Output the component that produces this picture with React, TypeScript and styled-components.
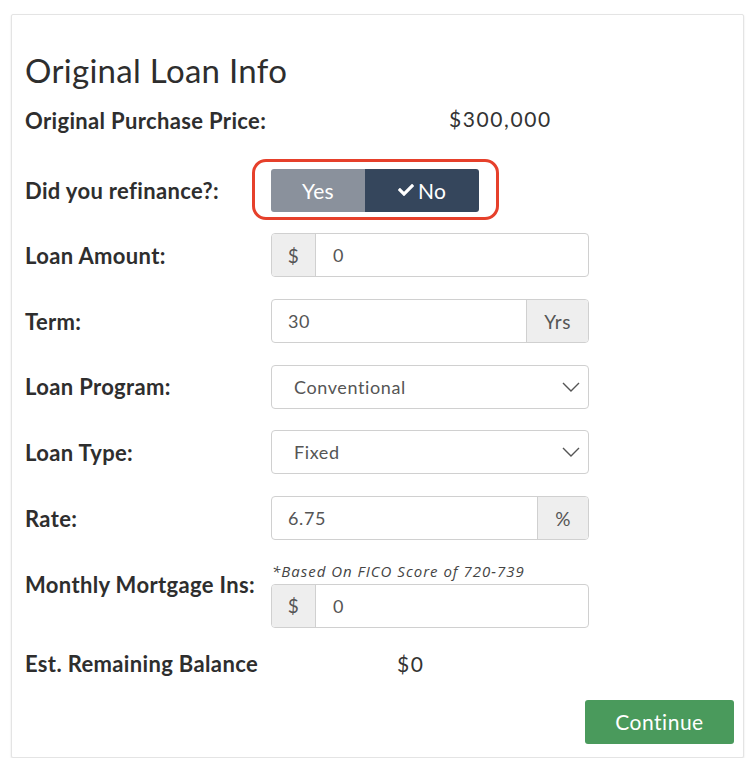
import styled, { createGlobalStyle } from 'styled-components'
import { FaCheck } from 'react-icons/fa'

const GlobalStyle = createGlobalStyle`
  html, body {
    margin: 0;
    padding: 0;
    background: #ffffff;
    font-family: Lato, "Noto Sans", sans-serif;
    color: #2e2e2e;
  }
  * {
    box-sizing: border-box;
  }
`

const Card = styled.div`
  width: 733px;
  margin: 14px 0 0 11px;
  padding: 35px 9px 13px 13px;
  border: 1px solid #e4e4e4;
  border-radius: 2px;
  box-shadow: 0 1px 2px rgba(0, 0, 0, 0.12);
  background: #ffffff;
`

const Title = styled.h1`
  margin: 0 0 13px;
  font-size: 33px;
  font-weight: 400;
  line-height: 40px;
  letter-spacing: 0.3px;
  color: #2e2e2e;
`

const Form = styled.div`
  display: flex;
  flex-direction: column;
  gap: 21.7px;
`

const Row = styled.div<{ $height?: number }>`
  display: flex;
  align-items: center;
  min-height: ${(p) => p.$height ?? 44}px;
`

const Label = styled.div<{ $shift?: number }>`
  width: 246px;
  flex: none;
  font-size: 22px;
  font-weight: 700;
  letter-spacing: 0.35px;
  color: #2e2e2e;
  white-space: nowrap;
  transform: translateY(${(p) => p.$shift ?? 0}px);
`

const Value = styled.div<{ $indent: number; $shift?: number }>`
  padding-left: ${(p) => p.$indent}px;
  font-size: 21px;
  color: #333;
  letter-spacing: 1.6px;
  transform: translateY(${(p) => p.$shift ?? 0}px);
`

const Field = styled.div`
  display: flex;
  flex-direction: column;
  width: 318px;
`

const Note = styled.div`
  font-family: "Open Sans", Lato, sans-serif;
  font-size: 15px;
  font-style: italic;
  color: #444;
  margin: 0 0 4px 1px;
  line-height: 18px;
  letter-spacing: 1px;
  white-space: nowrap;
`

const Group = styled.div`
  display: flex;
  width: 318px;
  height: 44px;
  border: 1px solid #d0d0d0;
  border-radius: 4px;
  overflow: hidden;
  background: #fff;
`

const Addon = styled.div<{ $width: number; $side: 'left' | 'right' }>`
  width: ${(p) => p.$width}px;
  flex: none;
  display: flex;
  align-items: center;
  justify-content: center;
  background: #eeeeee;
  color: #555;
  font-size: 19px;
  letter-spacing: 0.4px;
  ${(p) => (p.$side === 'left' ? 'border-right' : 'border-left')}: 1px solid #d0d0d0;
`

const InputText = styled.div<{ $pad: number }>`
  flex: 1;
  display: flex;
  align-items: center;
  padding-left: ${(p) => p.$pad}px;
  font-size: 18px;
  color: #555;
  letter-spacing: 0.6px;
`

const Select = styled.div`
  display: flex;
  align-items: center;
  justify-content: space-between;
  width: 318px;
  height: 44px;
  padding: 0 7px 0 22px;
  border: 1px solid #d0d0d0;
  border-radius: 4px;
  font-size: 18px;
  color: #555;
  letter-spacing: 0.6px;
`

const Toggle = styled.div`
  position: relative;
  display: flex;
  height: 43px;

  &::before {
    content: '';
    position: absolute;
    top: -10px;
    bottom: -8px;
    left: -19px;
    right: -20px;
    border: 3px solid #e6402b;
    border-radius: 14px;
  }
`

const ToggleButton = styled.div<{ $active?: boolean; $width: number }>`
  width: ${(p) => p.$width}px;
  display: flex;
  align-items: center;
  justify-content: center;
  gap: 4px;
  font-size: 21px;
  color: #ffffff;
  letter-spacing: 0.3px;
  background: ${(p) => (p.$active ? '#35465c' : '#8a919c')};
  border-radius: ${(p) => (p.$active ? '0 3px 3px 0' : '3px 0 0 3px')};
`

const Footer = styled.div`
  display: flex;
  justify-content: flex-end;
  margin-top: 22px;
`

const ContinueButton = styled.button`
  width: 149px;
  height: 44px;
  border: none;
  border-radius: 3px;
  background: #4a9a5c;
  color: #ffffff;
  font-family: Lato, "Noto Sans", sans-serif;
  font-size: 21px;
  letter-spacing: 0.5px;
  cursor: pointer;
`

function Chevron() {
  return (
    <svg width="20" height="12" viewBox="0 0 20 12">
      <polyline points="2,2 10,10 18,2" fill="none" stroke="#555" strokeWidth="1.4" />
    </svg>
  )
}

export default function App() {
  return (
    <>
      <GlobalStyle />
      <Card>
        <Title>Original Loan Info</Title>
        <Form>
          <Row>
            <Label $shift={-5}>Original Purchase Price:</Label>
            <Value $indent={178} $shift={-7}>$300,000</Value>
          </Row>

          <Row $height={43}>
            <Label>Did you refinance?:</Label>
            <Toggle>
              <ToggleButton $width={94}>Yes</ToggleButton>
              <ToggleButton $width={114} $active>
                <FaCheck size={16} /> No
              </ToggleButton>
            </Toggle>
          </Row>

          <Row>
            <Label>Loan Amount:</Label>
            <Group>
              <Addon $width={44} $side="left">$</Addon>
              <InputText $pad={17}>0</InputText>
            </Group>
          </Row>

          <Row>
            <Label>Term:</Label>
            <Group>
              <InputText $pad={16}>30</InputText>
              <Addon $width={62} $side="right">Yrs</Addon>
            </Group>
          </Row>

          <Row>
            <Label>Loan Program:</Label>
            <Select>
              Conventional
              <Chevron />
            </Select>
          </Row>

          <Row>
            <Label>Loan Type:</Label>
            <Select>
              Fixed
              <Chevron />
            </Select>
          </Row>

          <Row>
            <Label>Rate:</Label>
            <Group>
              <InputText $pad={16}>6.75</InputText>
              <Addon $width={51} $side="right">%</Addon>
            </Group>
          </Row>

          <Row>
            <Label $shift={-10}>Monthly Mortgage Ins:</Label>
            <Field>
              <Note>*Based On FICO Score of 720-739</Note>
              <Group>
                <Addon $width={44} $side="left">$</Addon>
                <InputText $pad={17}>0</InputText>
              </Group>
            </Field>
          </Row>

          <Row $height={28}>
            <Label>Est. Remaining Balance</Label>
            <Value $indent={126}>$0</Value>
          </Row>
        </Form>
        <Footer>
          <ContinueButton>Continue</ContinueButton>
        </Footer>
      </Card>
    </>
  )
}
